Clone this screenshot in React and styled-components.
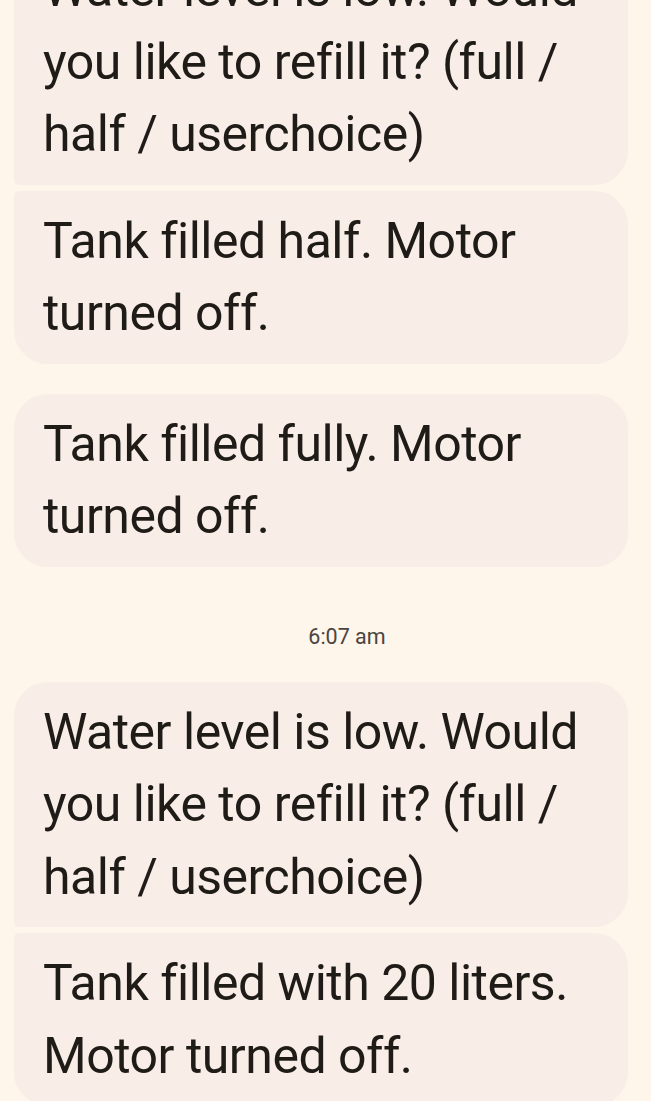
import React from "react";
import styled, { createGlobalStyle } from "styled-components";

const Global = createGlobalStyle`
  html, body { margin: 0; padding: 0; background: #fef6ea; }
  body { font-family: Roboto, "Noto Sans", sans-serif; overflow: hidden; }
`;

const Thread = styled.div`
  display: flex;
  flex-direction: column;
  padding: 0 23px 0 14px;
  margin-top: -61px;
`;

const Group = styled.div`
  display: flex;
  flex-direction: column;
  gap: 6px;
  margin-bottom: ${(p) => p.$mb || 0}px;
`;

const Bubble = styled.div`
  background: #f8ede7;
  color: #1f1b17;
  font-size: 50px;
  line-height: 72.5px;
  letter-spacing: -0.5px;
  padding: 14px 26px 14px 29px;
  border-radius: ${(p) => (p.$first ? 34 : 5)}px 34px 34px ${(p) => (p.$last ? 34 : 5)}px;
`;

const Stamp = styled.div`
  text-align: center;
  font-size: 21.5px;
  color: #4a4541;
  padding: 57px 0 32px 52px;
  line-height: 26px;
`;

export default function App() {
  return (
    <>
      <Global />
      <Thread>
        <Group $mb={30}>
          <Bubble $first>
            Water level is low. Would you like to refill it? (full / half / userchoice)
          </Bubble>
          <Bubble $last>Tank filled half. Motor turned off.</Bubble>
        </Group>
        <Group>
          <Bubble $first $last>Tank filled fully. Motor turned off.</Bubble>
        </Group>
        <Stamp>6:07 am</Stamp>
        <Group>
          <Bubble $first>
            Water level is low. Would you like to refill it? (full / half / userchoice)
          </Bubble>
          <Bubble $last>Tank filled with 20 liters. Motor turned off.</Bubble>
        </Group>
      </Thread>
    </>
  );
}
